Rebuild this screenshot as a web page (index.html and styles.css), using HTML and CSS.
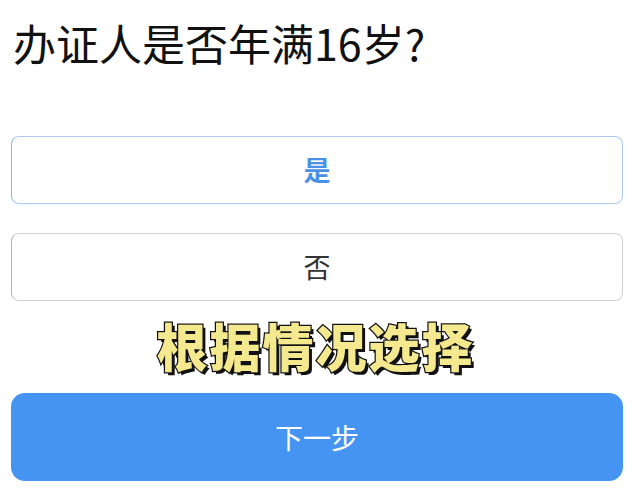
FILE: index.html
```html
<!DOCTYPE html>
<html lang="zh-CN">
<head>
<meta charset="utf-8">
<title>办证人是否年满16岁？</title>
<link rel="stylesheet" href="styles.css">
</head>
<body>
<main class="page">
  <h1 class="question">办证人是否年满16岁?</h1>
  <div class="options">
    <button class="option option-selected">是</button>
    <button class="option">否</button>
  </div>
  <button class="next">下一步</button>
  <div class="caption">根据情况选择</div>
</main>
</body>
</html>
```
FILE: styles.css
```css
html, body {
  margin: 0;
  padding: 0;
  background: #ffffff;
}
body {
  font-family: "Noto Sans CJK SC", "Noto Sans", sans-serif;
  width: 639px;
  height: 495px;
  overflow: hidden;
}
.page {
  position: relative;
  padding: 0 16px 0 11px;
  display: flex;
  flex-direction: column;
}
.question {
  margin: 12px 0 0 2px;
  font-size: 43px;
  line-height: 60px;
  font-weight: 400;
  color: #111111;
  letter-spacing: 0;
}
.options {
  margin-top: 64px;
  display: flex;
  flex-direction: column;
  gap: 29px;
}
.option {
  display: block;
  width: 100%;
  height: 68px;
  margin: 0;
  padding: 0;
  background: #ffffff;
  border: 1px solid #d2d2d2;
  border-left-color: #b4b4b4;
  border-radius: 8px;
  font-family: inherit;
  font-size: 27px;
  font-weight: 400;
  color: #333333;
  line-height: 66px;
  text-align: center;
}
.option-selected {
  border-color: #aecaee;
  border-left-color: #94b6e2;
  color: #4a90e6;
  font-weight: 700;
}
.next {
  margin-top: 92px;
  width: 100%;
  height: 88px;
  padding: 0;
  border: none;
  border-radius: 14px;
  background: #4594f1;
  color: #ffffff;
  font-family: inherit;
  font-size: 28px;
  font-weight: 400;
  line-height: 88px;
  text-align: center;
}
.caption {
  position: absolute;
  left: 0;
  right: 0;
  top: 312px;
  text-align: center;
  font-size: 51px;
  line-height: 66px;
  font-weight: 900;
  color: #f4e98f;
  -webkit-text-stroke: 2.5px #111111;
  paint-order: stroke fill;
  text-shadow: 3px 3px 0 #111111;
  letter-spacing: 2px;
  padding-right: 8px;
}
```
